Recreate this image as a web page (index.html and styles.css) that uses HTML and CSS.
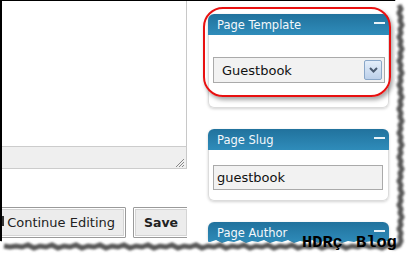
FILE: index.html
```html
<!DOCTYPE html>
<html>

<head>
    <title>Page Template</title>
    <link rel="stylesheet" href="styles.css">
</head>

<body>
    <div class="screen">
        <div class="shot">
            <div class="main">
                <div class="editor"></div>
                <div class="statusBar">
                    <svg class="grip" width="9" height="9" viewBox="0 0 9 9">
                        <path d="M9 1 L1 9 M9 4 L4 9 M9 7 L7 9" stroke="#888" stroke-width="1" />
                    </svg>
                </div>
                <div class="actions">
                    <button class="button continueButton">Continue Editing</button>
                    <button class="button saveButton">Save</button>
                </div>
            </div>

            <div class="side">
                <div class="box">
                    <div class="boxHeader">Page Template <span class="toggle"></span></div>
                    <div class="boxBody templateBody">
                        <div class="select">
                            <span>Guestbook</span>
                            <span class="selectArrow">
                                <svg width="9" height="6" viewBox="0 0 9 6">
                                    <path d="M1 1 L4.5 4.5 L8 1" fill="none" stroke="#4a5a70" stroke-width="2" />
                                </svg>
                            </span>
                        </div>
                    </div>
                    <div class="highlight"></div>
                </div>

                <div class="box">
                    <div class="boxHeader">Page Slug <span class="toggle"></span></div>
                    <div class="boxBody slugBody">
                        <div class="textInput">guestbook</div>
                    </div>
                </div>

                <div class="box">
                    <div class="boxHeader">Page Author <span class="toggle"></span></div>
                </div>
            </div>
        </div>

        <svg class="tornEdge" width="407" height="257" viewBox="0 0 407 257">
            <defs>
                <filter id="soft" x="-20%" y="-20%" width="140%" height="140%">
                    <feGaussianBlur stdDeviation="1.3" />
                </filter>
            </defs>
            <path fill="#fff" d="M395 0 L397 4 L395 8 L397 12 L396 16 L398 20 L396 24 L397 28 L395 32 L397 36 L396 40 L398 44 L396 48 L397 52 L395 56 L397 60 L396 64 L398 68 L396 72 L397 76 L395 80 L397 84 L396 88 L398 92 L396 96 L397 100 L395 104 L397 108 L396 112 L398 116 L396 120 L397 124 L395 128 L397 132 L396 136 L398 140 L396 144 L397 148 L395 152 L397 156 L396 160 L398 164 L396 168 L397 172 L395 176 L397 180 L396 184 L398 188 L396 192 L397 196 L395 200 L397 204 L396 208 L398 212 L396 216 L397 220 L395 224 L397 228 L396 232 L397 236 L395 240 L390 242 L384 240 L378 243 L372 241 L366 242 L360 240 L354 242 L348 241 L342 243 L336 240 L330 242 L324 241 L318 243 L312 240 L306 242 L300 241 L294 243 L288 240 L282 242 L276 241 L270 243 L264 240 L258 242 L252 241 L246 243 L240 240 L234 242 L228 241 L222 243 L216 240 L210 242 L204 241 L198 243 L192 240 L186 242 L180 241 L174 243 L168 240 L162 242 L156 241 L150 243 L144 240 L138 242 L132 241 L126 243 L120 240 L114 242 L108 241 L102 243 L96 240 L90 242 L84 241 L78 243 L72 240 L66 242 L60 241 L54 243 L48 240 L42 242 L36 241 L30 243 L24 240 L18 242 L12 241 L6 242 L0 241 L0 257 L407 257 L407 0 Z" />
            <path filter="url(#soft)" fill="none" stroke="#5a5a5a" stroke-width="5" transform="translate(4 5)" d="M395 0 L397 4 L395 8 L397 12 L396 16 L398 20 L396 24 L397 28 L395 32 L397 36 L396 40 L398 44 L396 48 L397 52 L395 56 L397 60 L396 64 L398 68 L396 72 L397 76 L395 80 L397 84 L396 88 L398 92 L396 96 L397 100 L395 104 L397 108 L396 112 L398 116 L396 120 L397 124 L395 128 L397 132 L396 136 L398 140 L396 144 L397 148 L395 152 L397 156 L396 160 L398 164 L396 168 L397 172 L395 176 L397 180 L396 184 L398 188 L396 192 L397 196 L395 200 L397 204 L396 208 L398 212 L396 216 L397 220 L395 224 L397 228 L396 232 L397 236 L395 240 L390 242 L384 240 L378 243 L372 241 L366 242 L360 240 L354 242 L348 241 L342 243 L336 240 L330 242 L324 241 L318 243 L312 240 L306 242 L300 241 L294 243 L288 240 L282 242 L276 241 L270 243 L264 240 L258 242 L252 241 L246 243 L240 240 L234 242 L228 241 L222 243 L216 240 L210 242 L204 241 L198 243 L192 240 L186 242 L180 241 L174 243 L168 240 L162 242 L156 241 L150 243 L144 240 L138 242 L132 241 L126 243 L120 240 L114 242 L108 241 L102 243 L96 240 L90 242 L84 241 L78 243 L72 240 L66 242 L60 241 L54 243 L48 240 L42 242 L36 241 L30 243 L24 240 L18 242 L12 241 L6 242 L0 241" />
        </svg>

        <div class="watermark">HDRç Blog</div>
    </div>
</body>

</html>
```

FILE: styles.css
```css
body {
    margin: 0;
    background-color: #fff;
    font-family: 'DejaVu Sans', Verdana, sans-serif;
}

.screen {
    position: relative;
    width: 407px;
    height: 257px;
    overflow: hidden;
    background-color: #fff;
}

.shot {
    display: flex;
    width: 400px;
    height: 245px;
    border-top: 1px solid #000;
    border-left: 2px solid #000;
    box-sizing: border-box;
}

.main {
    display: flex;
    flex-direction: column;
    width: 185px;
    flex-shrink: 0;
    overflow: hidden;
}

.editor {
    height: 145px;
    border-right: 1px solid #c8c8c8;
    border-bottom: 1px solid #ccc;
}

.statusBar {
    display: flex;
    justify-content: flex-end;
    align-items: flex-end;
    height: 20px;
    background-color: #efefef;
    border-right: 1px solid #c8c8c8;
    border-bottom: 1px solid #ccc;
    padding-right: 2px;
    padding-bottom: 1px;
}

.actions {
    display: flex;
    gap: 7px;
    margin-top: 38px;
    margin-left: -67px;
}

.button {
    height: 31px;
    padding: 0 9px;
    font-family: 'DejaVu Sans', Verdana, sans-serif;
    font-size: 13px;
    color: #222;
    background-color: #ececec;
    border: 1px solid #9a9a9a;
    box-shadow: inset 0 0 0 1px #fff, inset 0 0 0 2px #d4d4d4;
    border-radius: 1px;
    white-space: nowrap;
    flex-shrink: 0;
}

.continueButton {
    position: relative;
    width: 191px;
    text-align: right;
    padding-right: 10px;
}

/* stem of the word cut off at the left edge */
.continueButton::before {
    content: "";
    position: absolute;
    left: 66px;
    top: 8px;
    width: 1.5px;
    height: 10px;
    background-color: #333;
}

.saveButton {
    width: 56px;
    padding: 0;
    font-weight: bold;
    font-size: 12.5px;
}

.side {
    width: 181px;
    margin-left: 21px;
    padding-top: 13px;
    display: flex;
    flex-direction: column;
    gap: 21px;
}

.box {
    position: relative;
    border-radius: 6px;
    background-color: #fff;
    box-shadow: 0 1px 3px rgba(0, 0, 0, 0.18);
}

.boxHeader {
    display: flex;
    justify-content: space-between;
    align-items: center;
    height: 21px;
    padding: 0 4px 0 9px;
    border-radius: 6px 6px 0 0;
    background: linear-gradient(#21729d, #2f8cba);
    color: #f4f8fb;
    font-size: 11.5px;
}

.toggle {
    width: 11px;
    height: 2px;
    margin-bottom: 3px;
    background-color: #e8f2f8;
}

.boxBody {
    border: 1px solid #dcdcdc;
    border-top: none;
    border-radius: 0 0 6px 6px;
    padding: 0 3px 0 4px;
}

.templateBody {
    padding-top: 22px;
    padding-bottom: 24px;
}

.slugBody {
    padding-top: 15px;
    padding-bottom: 10px;
}

.select {
    display: flex;
    justify-content: space-between;
    align-items: center;
    height: 26px;
    padding: 0 2px 0 8px;
    background-color: #f2f2f2;
    border: 1px solid #aaa;
    box-sizing: border-box;
    font-size: 13px;
    color: #111;
}

.selectArrow {
    display: flex;
    justify-content: center;
    align-items: center;
    width: 16px;
    height: 18px;
    border: 1px solid #8aa7c8;
    border-radius: 2px;
    background: linear-gradient(#e4eefa, #bcd0ea);
}

.textInput {
    width: 170px;
    height: 25px;
    padding-left: 3px;
    line-height: 23px;
    background-color: #f2f2f2;
    border: 1px solid #aaa;
    box-sizing: border-box;
    font-size: 13px;
    color: #111;
}

.highlight {
    position: absolute;
    top: -7px;
    left: -5px;
    width: 188px;
    height: 90px;
    border: 2px solid #e81010;
    border-radius: 20px;
    box-sizing: border-box;
    box-shadow: 2px 3px 4px rgba(0, 0, 0, 0.35);
}

.tornEdge {
    position: absolute;
    top: 0;
    left: 0;
}

.watermark {
    position: absolute;
    left: 302px;
    top: 233px;
    font-family: 'Liberation Mono', 'Courier New', monospace;
    font-weight: bold;
    font-size: 17px;
    word-spacing: 3px;
    color: #000;
}
```
